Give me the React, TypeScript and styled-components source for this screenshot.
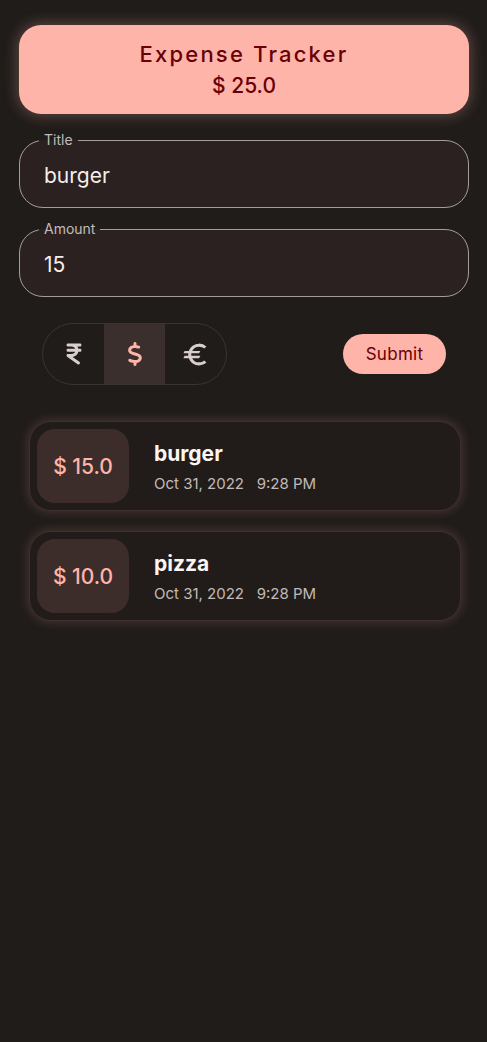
import React from "react";
import styled, { createGlobalStyle } from "styled-components";
import { FaIndianRupeeSign, FaDollarSign } from "react-icons/fa6";
import { MdEuro } from "react-icons/md";

const Global = createGlobalStyle`
  html, body { margin: 0; padding: 0; background: #201c1a; }
  body { font-family: "Inter", "Noto Sans", sans-serif; }
  * { box-sizing: border-box; }
`;

const Page = styled.div`
  min-height: 1042px;
  background: #201c1a;
  padding: 25px 18px 0 19px;
  display: flex;
  flex-direction: column;
`;

const Header = styled.div`
  height: 89px;
  border-radius: 22px;
  background: #ffb4a9;
  box-shadow: 0 0 14px 2px rgba(255, 180, 169, 0.28);
  display: flex;
  flex-direction: column;
  align-items: center;
  justify-content: center;
  gap: 6px;
  color: #690005;
`;

const HeaderTitle = styled.div`
  font-size: 22px;
  letter-spacing: 2.2px;
  font-weight: 500;
  line-height: 26px;
`;

const HeaderTotal = styled.div`
  font-size: 21px;
  font-weight: 500;
  line-height: 26px;
`;

const Field = styled.fieldset`
  margin: 0;
  border: 1px solid #a59d9b;
  border-radius: 24px;
  background: #2a2120;
  padding: 15px 24px 17px;
  min-inline-size: 0;
`;

const Legend = styled.legend`
  font-size: 14px;
  color: #c3bbb9;
  padding: 0 5px;
  margin-left: -5px;
  line-height: 14px;
`;

const FieldValue = styled.div`
  font-size: 21px;
  line-height: 28px;
  color: #f4eeec;
`;

const Fields = styled.div`
  margin-top: 19px;
  display: flex;
  flex-direction: column;
  gap: 14px;
`;

const Controls = styled.div`
  margin-top: 26px;
  padding: 0 23px 0 23px;
  display: flex;
  align-items: center;
  justify-content: space-between;
`;

const Toggle = styled.div`
  display: flex;
  height: 62px;
  border: 1px solid #3a3331;
  border-radius: 31px;
  overflow: hidden;
`;

const Seg = styled.div<{ $active?: boolean; $size?: number }>`
  width: 61px;
  display: flex;
  align-items: center;
  justify-content: center;
  background: ${(p) => (p.$active ? "#3b2f2e" : "transparent")};
  color: ${(p) => (p.$active ? "#ffb4a9" : "#d8cfcd")};
  svg {
    width: ${(p) => p.$size ?? 24}px;
    height: ${(p) => p.$size ?? 24}px;
  }
`;

const SubmitBtn = styled.button`
  width: 103px;
  height: 40px;
  border: none;
  border-radius: 20px;
  background: #ffb4a9;
  color: #690005;
  font-family: "Inter", "Noto Sans", sans-serif;
  font-size: 17px;
  letter-spacing: 0.3px;
`;

const List = styled.div`
  margin-top: 36px;
  padding: 0 8px 0 10px;
  display: flex;
  flex-direction: column;
  gap: 20px;
`;

const Card = styled.div`
  height: 90px;
  border-radius: 22px;
  background: #211c1a;
  border: 1px solid #3d2f2d;
  box-shadow: 0 0 10px 2px rgba(255, 170, 160, 0.16);
  padding: 7px;
  display: flex;
  align-items: center;
  gap: 25px;
`;

const Badge = styled.div`
  width: 92px;
  height: 74px;
  border-radius: 18px;
  background: #3d2d2a;
  color: #ffb4a9;
  font-size: 21px;
  font-weight: 500;
  display: flex;
  align-items: center;
  justify-content: center;
`;

const Info = styled.div`
  display: flex;
  flex-direction: column;
  gap: 8px;
  margin-top: 4px;
`;

const Name = styled.div`
  font-size: 21px;
  font-weight: 700;
  color: #fbf6f4;
  line-height: 24px;
`;

const Meta = styled.div`
  font-size: 15px;
  color: #c2bab8;
  line-height: 20px;
  white-space: pre;
`;

const items = [
  { amount: "$ 15.0", name: "burger" },
  { amount: "$ 10.0", name: "pizza" },
];

export default function App() {
  return (
    <>
      <Global />
      <Page>
        <Header>
          <HeaderTitle>Expense Tracker</HeaderTitle>
          <HeaderTotal>$ 25.0</HeaderTotal>
        </Header>
        <Fields>
          <Field>
            <Legend>Title</Legend>
            <FieldValue>burger</FieldValue>
          </Field>
          <Field>
            <Legend>Amount</Legend>
            <FieldValue>15</FieldValue>
          </Field>
        </Fields>
        <Controls>
          <Toggle>
            <Seg>
              <FaIndianRupeeSign />
            </Seg>
            <Seg $active>
              <FaDollarSign />
            </Seg>
            <Seg $size={29}>
              <MdEuro />
            </Seg>
          </Toggle>
          <SubmitBtn>Submit</SubmitBtn>
        </Controls>
        <List>
          {items.map((it) => (
            <Card key={it.name}>
              <Badge>{it.amount}</Badge>
              <Info>
                <Name>{it.name}</Name>
                <Meta>{"Oct 31, 2022   9:28 PM"}</Meta>
              </Info>
            </Card>
          ))}
        </List>
      </Page>
    </>
  );
}
